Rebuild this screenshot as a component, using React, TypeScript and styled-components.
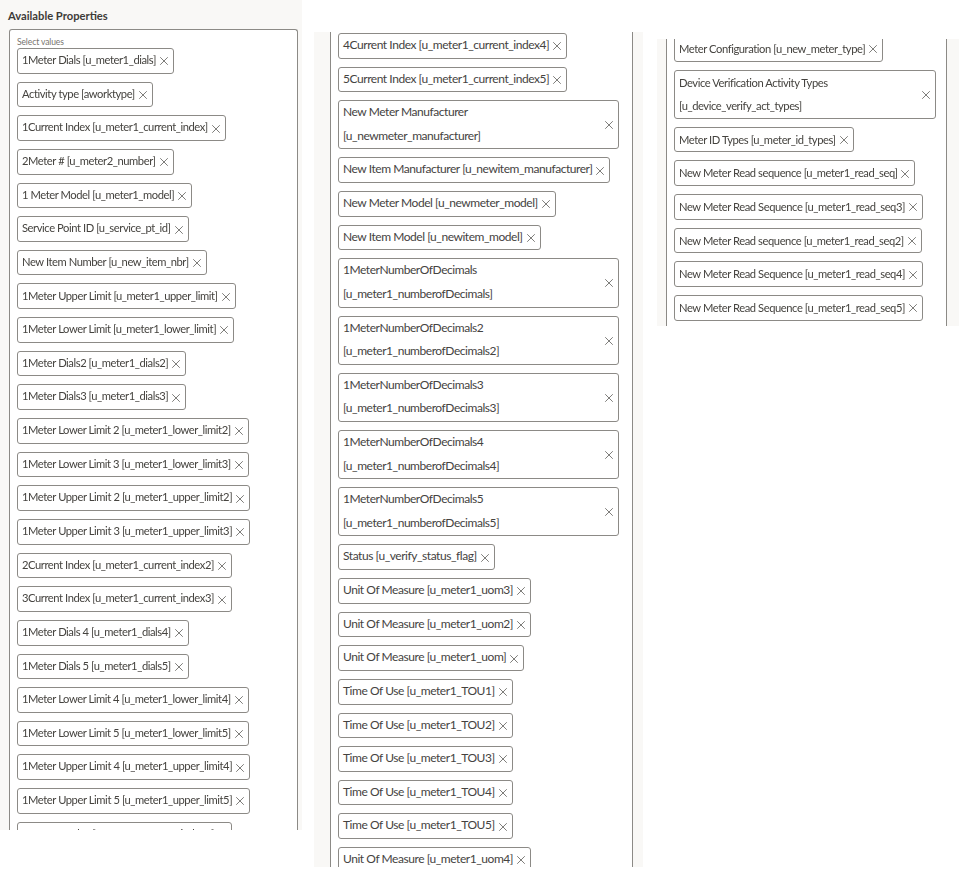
import styled, { createGlobalStyle } from "styled-components";
import { X } from "lucide-react";

const GlobalStyle = createGlobalStyle`
    html, body {
        margin: 0;
        background-color: #ffffff;
    }
    body {
        font-family: "Lato", "Open Sans", sans-serif;
        color: #3d3b38;
    }
`;

// the reference is a scaled-up capture, so everything is a little soft
const Page = styled.div`
    width: 962px;
    height: 883px;
    display: flex;
    align-items: flex-start;
    overflow: hidden;
    filter: blur(0.35px);
`;

const Panel = styled.section<{ $top: number; $left: number; $width: number; $height: number; $inset: number; $right: number }>`
    box-sizing: border-box;
    flex: none;
    margin: ${(p) => p.$top}px 0 0 ${(p) => p.$left}px;
    width: ${(p) => p.$width}px;
    height: ${(p) => p.$height}px;
    padding: 0 ${(p) => p.$right}px 0 ${(p) => p.$inset}px;
    background-color: #f9f8f6;
    display: flex;
    flex-direction: column;
    overflow: hidden;
`;

const Title = styled.h2`
    margin: 0 0 0 -1px;
    height: 29px;
    font-size: 11.2px;
    line-height: 31px;
    font-weight: 700;
    color: #3d3b38;
`;

const Box = styled.div<{ $closed?: boolean; $pad: number }>`
    box-sizing: border-box;
    flex: 1;
    min-height: 0;
    background-color: #ffffff;
    border: 1px solid #8c8a86;
    border-width: ${(p) => (p.$closed ? "1px 1px 0" : "0 1px")};
    border-radius: ${(p) => (p.$closed ? "3px 3px 0 0" : "0")};
    padding: ${(p) => p.$pad}px 0 0 7px;
    overflow: hidden;
`;

const Label = styled.div`
    height: 11px;
    font-size: 8.5px;
    line-height: 10px;
    letter-spacing: -0.1px;
    color: #77736e;
`;

const ChipList = styled.ul<{ $shift?: number }>`
    list-style: none;
    margin: ${(p) => p.$shift ?? 0}px 0 0;
    padding: 0;
    display: flex;
    flex-direction: column;
    align-items: flex-start;
    gap: 8px;
`;

const Chip = styled.li<{ $wide?: number; $size: number; $track: number }>`
    box-sizing: border-box;
    display: flex;
    align-items: center;
    justify-content: space-between;
    gap: 1px;
    width: ${(p) => (p.$wide ? `${p.$wide}px` : "auto")};
    min-height: 25.65px;
    padding: 0 2px 0 4px;
    border: 1px solid #8c8a86;
    border-radius: 3px;
    background-color: #ffffff;
    font-size: ${(p) => p.$size}px;
    letter-spacing: ${(p) => p.$track}px;
    line-height: 23.6px;
    white-space: nowrap;
    color: #45433f;
`;

const ChipText = styled.span<{ $lift: number }>`
    transform: translateY(${(p) => -p.$lift}px);
`;

const Remove = styled(X)`
    flex: none;
    width: 14px;
    height: 14px;
    color: #55534f;
    margin-top: 1px;
`;

type Item = { text: string; second?: string };

const first: Item[] = [
    { text: "1Meter Dials [u_meter1_dials]" },
    { text: "Activity type [aworktype]" },
    { text: "1Current Index [u_meter1_current_index]" },
    { text: "2Meter # [u_meter2_number]" },
    { text: "1 Meter Model [u_meter1_model]" },
    { text: "Service Point ID [u_service_pt_id]" },
    { text: "New Item Number [u_new_item_nbr]" },
    { text: "1Meter Upper Limit [u_meter1_upper_limit]" },
    { text: "1Meter Lower Limit [u_meter1_lower_limit]" },
    { text: "1Meter Dials2 [u_meter1_dials2]" },
    { text: "1Meter Dials3 [u_meter1_dials3]" },
    { text: "1Meter Lower Limit 2 [u_meter1_lower_limit2]" },
    { text: "1Meter Lower Limit 3 [u_meter1_lower_limit3]" },
    { text: "1Meter Upper Limit 2 [u_meter1_upper_limit2]" },
    { text: "1Meter Upper Limit 3 [u_meter1_upper_limit3]" },
    { text: "2Current Index [u_meter1_current_index2]" },
    { text: "3Current Index [u_meter1_current_index3]" },
    { text: "1Meter Dials 4 [u_meter1_dials4]" },
    { text: "1Meter Dials 5 [u_meter1_dials5]" },
    { text: "1Meter Lower Limit 4 [u_meter1_lower_limit4]" },
    { text: "1Meter Lower Limit 5 [u_meter1_lower_limit5]" },
    { text: "1Meter Upper Limit 4 [u_meter1_upper_limit4]" },
    { text: "1Meter Upper Limit 5 [u_meter1_upper_limit5]" },
    { text: "4Current Index [u_meter1_current_index4]" },
];

const second: Item[] = [
    { text: "4Current Index [u_meter1_current_index4]" },
    { text: "5Current Index [u_meter1_current_index5]" },
    { text: "New Meter Manufacturer", second: "[u_newmeter_manufacturer]" },
    { text: "New Item Manufacturer [u_newitem_manufacturer]" },
    { text: "New Meter Model [u_newmeter_model]" },
    { text: "New Item Model [u_newitem_model]" },
    { text: "1MeterNumberOfDecimals", second: "[u_meter1_numberofDecimals]" },
    { text: "1MeterNumberOfDecimals2", second: "[u_meter1_numberofDecimals2]" },
    { text: "1MeterNumberOfDecimals3", second: "[u_meter1_numberofDecimals3]" },
    { text: "1MeterNumberOfDecimals4", second: "[u_meter1_numberofDecimals4]" },
    { text: "1MeterNumberOfDecimals5", second: "[u_meter1_numberofDecimals5]" },
    { text: "Status [u_verify_status_flag]" },
    { text: "Unit Of Measure [u_meter1_uom3]" },
    { text: "Unit Of Measure [u_meter1_uom2]" },
    { text: "Unit Of Measure [u_meter1_uom]" },
    { text: "Time Of Use [u_meter1_TOU1]" },
    { text: "Time Of Use [u_meter1_TOU2]" },
    { text: "Time Of Use [u_meter1_TOU3]" },
    { text: "Time Of Use [u_meter1_TOU4]" },
    { text: "Time Of Use [u_meter1_TOU5]" },
    { text: "Unit Of Measure [u_meter1_uom4]" },
];

const third: Item[] = [
    { text: "Meter Configuration [u_new_meter_type]" },
    { text: "Device Verification Activity Types", second: "[u_device_verify_act_types]" },
    { text: "Meter ID Types [u_meter_id_types]" },
    { text: "New Meter Read sequence [u_meter1_read_seq]" },
    { text: "New Meter Read Sequence [u_meter1_read_seq3]" },
    { text: "New Meter Read sequence [u_meter1_read_seq2]" },
    { text: "New Meter Read Sequence [u_meter1_read_seq4]" },
    { text: "New Meter Read Sequence [u_meter1_read_seq5]" },
];

type ChipsProps = { items: Item[]; wide?: number; shift?: number; size: number; track: number; lift: number };

function Chips({ items, wide, shift, size, track, lift }: ChipsProps) {
    return (
        <ChipList $shift={shift}>
            {items.map((item) => (
                <Chip key={item.text + item.second} $wide={item.second ? wide : undefined} $size={size} $track={track}>
                    <ChipText $lift={lift}>
                        {item.text}
                        {item.second && <br />}
                        {item.second}
                    </ChipText>
                    <Remove strokeWidth={1.3} />
                </Chip>
            ))}
        </ChipList>
    );
}

export function App() {
    return (
        <>
            <GlobalStyle />
            <Page>
                <Panel $top={0} $left={0} $width={302} $height={830} $inset={9} $right={4}>
                    <Title>Available Properties</Title>
                    <Box $closed $pad={7}>
                        <Label>Select values</Label>
                        <Chips items={first} size={11.2} track={-0.43} lift={1} />
                    </Box>
                </Panel>
                <Panel $top={32} $left={12} $width={329} $height={835} $inset={16} $right={10}>
                    <Box $pad={1}>
                        <Chips items={second} wide={281} size={12} track={-0.45} lift={1} />
                    </Box>
                </Panel>
                <Panel $top={39} $left={14} $width={302} $height={287} $inset={9} $right={12}>
                    <Box $pad={0}>
                        <Chips items={third} wide={262} shift={-3} size={11.2} track={-0.43} lift={0} />
                    </Box>
                </Panel>
            </Page>
        </>
    );
}

export default App;
